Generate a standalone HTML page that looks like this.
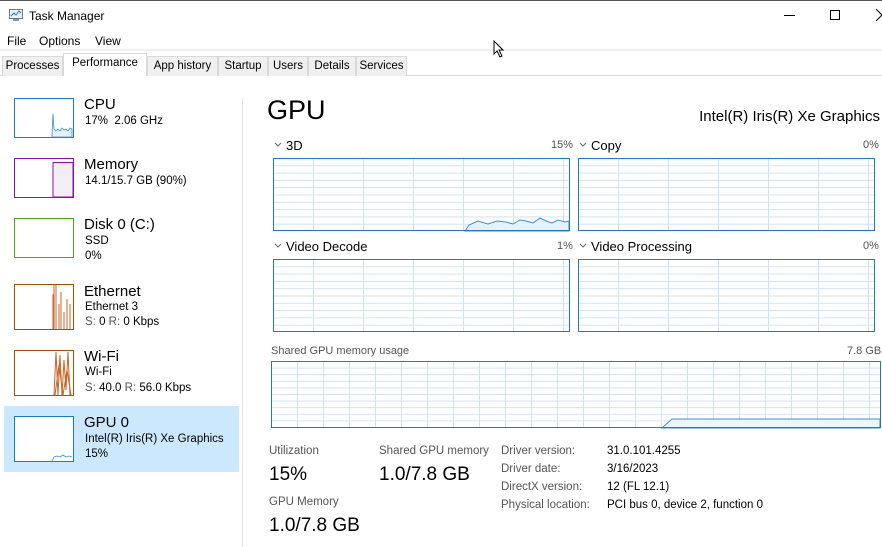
<!DOCTYPE html>
<html><head><meta charset="utf-8"><style>
*{margin:0;padding:0;box-sizing:border-box}
body{width:882px;height:547px;background:#fff;font-family:"Liberation Sans",sans-serif;font-size:11.5px;color:#000;position:relative;overflow:hidden}
.a{position:absolute;white-space:nowrap}
.tab{position:absolute;top:56px;height:20px;background:#f0f0f0;border:1px solid #d9d9d9;border-bottom:none;font-size:11.5px;padding-top:3px;text-align:center}
.g{color:#555}
.t1{font-size:15px}
.t2{font-size:11.5px}
.lbl{font-size:13px}
</style></head><body>
<div class="a" style="left:0;top:0;width:882px;height:1px;background:#555"></div>
<svg class="a" style="left:8px;top:8px" width="16" height="14" viewBox="0 0 16 14"><rect x="1.5" y="1.5" width="13" height="9" fill="#e8f0f8" stroke="#6a7a8a"/><path d="M3 8 L6 5 L8 7 L11 3 L13 5" fill="none" stroke="#2a7ab8" stroke-width="1"/><rect x="5" y="11" width="6" height="2" fill="#8a96a2"/></svg>
<div class="a" style="left:29px;top:9px;font-size:12px">Task Manager</div>
<div class="a" style="left:784px;top:15px;width:11px;height:1px;background:#000"></div>
<div class="a" style="left:830px;top:10px;width:10px;height:10px;border:1px solid #000"></div>
<svg class="a" style="left:876px;top:9px" width="8" height="12"><path d="M0 0 L6 6 L0 12" stroke="#000" fill="none"/></svg>
<div class="a" style="left:7px;top:34px;font-size:12px">File</div>
<div class="a" style="left:39px;top:34px;font-size:12px">Options</div>
<div class="a" style="left:95px;top:34px;font-size:12px">View</div>
<div class="a" style="left:0;top:49px;width:882px;height:2px;background:#f0f0f0"></div>
<div class="a" style="left:0;top:75px;width:882px;height:1px;background:#d9d9d9"></div>
<div class="tab" style="left:2px;width:61px">Processes</div>
<div class="tab" style="left:147px;width:71px">App history</div>
<div class="tab" style="left:218px;width:50px">Startup</div>
<div class="tab" style="left:268px;width:40px">Users</div>
<div class="tab" style="left:308px;width:48px">Details</div>
<div class="tab" style="left:356px;width:51px">Services</div>
<div class="tab" style="left:63px;top:53px;width:84px;height:23px;background:#fff;padding-top:3px">Performance</div>
<svg class="a" style="left:493px;top:40px" width="12" height="18"><path d="M1 1 L1 14 L4 11 L7 17 L9 16 L6 10 L10 10 Z" fill="#fff" stroke="#000"/></svg>
<div class="a" style="left:242px;top:98px;width:1px;height:449px;background:#e5e5e5"></div>
<div class="a" style="left:4px;top:406px;width:235px;height:66px;background:#cce8ff"></div>

<svg class="a" style="left:14px;top:98px" width="60" height="40"><rect x=".5" y=".5" width="59" height="39" fill="#fff" stroke="#1c7ac6"/><path d="M38 39 L38 36 L39 16 L40 31 L42 33 L44 31 L46 33 L48 30 L50 32 L52 31 L54 33 L56 30 L58 31 L58 39 Z" fill="#e6f1fa" stroke="#3c8fcf" stroke-width=".8"/></svg>
<div class="a t1" style="left:84px;top:96px">CPU</div><div class="a t2" style="left:85px;top:115px">17%&nbsp; 2.06 GHz</div>

<svg class="a" style="left:14px;top:158px" width="60" height="40"><rect x=".5" y=".5" width="59" height="39" fill="#fff" stroke="#8b12ae"/><rect x="39" y="4.5" width="20" height="34.5" fill="#f2eff4" stroke="#8b12ae"/></svg>
<div class="a t1" style="left:84px;top:156px">Memory</div><div class="a t2" style="left:85px;top:175px">14.1/15.7 GB (90%)</div>

<svg class="a" style="left:14px;top:218px" width="60" height="40"><rect x=".5" y=".5" width="59" height="39" fill="#fff" stroke="#4da60c"/></svg>
<div class="a t1" style="left:84px;top:216px">Disk 0 (C:)</div><div class="a t2" style="left:85px;top:235px">SSD</div><div class="a t2" style="left:85px;top:250px">0%</div>

<svg class="a" style="left:14px;top:284px" width="60" height="46"><rect x=".5" y=".5" width="59" height="45" fill="#fff" stroke="#a74f01"/><path d="M40 45 L40 1 M42 45 L42 1 M39 45 L39 10 M45 45 L45 20 M47 45 L47 8 M50 45 L50 28 M53 45 L53 15 M56 45 L56 20" stroke="#c8662a" stroke-width="1"/></svg>
<div class="a t1" style="left:84px;top:283px">Ethernet</div><div class="a t2" style="left:85px;top:301px">Ethernet 3</div><div class="a t2" style="left:85px;top:316px"><span class="g">S:</span> 0 <span class="g">R:</span> 0 Kbps</div>

<svg class="a" style="left:14px;top:350px" width="60" height="46"><rect x=".5" y=".5" width="59" height="45" fill="#fff" stroke="#a74f01"/><path d="M40 45 L42 2 L44 45 L46 5 L48 45 L50 10 L52 40 L54 2 L56 45 M41 45 L45 15 L49 45 L53 20 L57 45" stroke="#c8662a" fill="none" stroke-width="1"/></svg>
<div class="a t1" style="left:84px;top:348px">Wi-Fi</div><div class="a t2" style="left:85px;top:366px">Wi-Fi</div><div class="a t2" style="left:85px;top:382px"><span class="g">S:</span> 40.0 <span class="g">R:</span> 56.0 Kbps</div>

<svg class="a" style="left:14px;top:416px" width="60" height="46"><rect x=".5" y=".5" width="59" height="45" fill="#fff" stroke="#1c7ac6"/><path d="M38 45 L40 41 L43 40 L46 41 L49 39 L52 41 L55 40 L58 41" fill="none" stroke="#3c8fcf" stroke-width=".8"/></svg>
<div class="a t1" style="left:84px;top:414px">GPU 0</div><div class="a t2" style="left:85px;top:433px">Intel(R) Iris(R) Xe Graphics</div><div class="a t2" style="left:85px;top:448px">15%</div>

<div class="a" style="left:267px;top:95px;font-size:27px">GPU</div>
<div class="a" style="right:2px;top:108px;font-size:15px">Intel(R) Iris(R) Xe Graphics</div>

<svg class="a" style="left:0;top:0" width="882" height="547" shape-rendering="crispEdges">
<defs>
<pattern id="p1" x="-10" y="0" width="50" height="7.3" patternUnits="userSpaceOnUse"><rect x="0" y="0" width="50" height="1" fill="#cfe3f3"/><rect x="0" y="0" width="1" height="7.3" fill="#cfe3f3"/></pattern>
<pattern id="p2" x="0" y="0" width="26" height="6.6" patternUnits="userSpaceOnUse"><rect x="0" y="0" width="26" height="1" fill="#cfe3f3"/><rect x="0" y="0" width="1" height="6.6" fill="#cfe3f3"/></pattern>
</defs>
<g transform="translate(273,158)"><rect width="297" height="73" fill="url(#p1)"/><path d="M192 73 L196 67 L205 63 L215 66 L224 63 L233 64 L240 66 L247 62 L253 63 L260 65 L267 60 L273 63 L279 65 L285 62 L292 64 L296 63 L296 73 Z" fill="#e6f1fa" stroke="#3c8fcf" stroke-width="1" shape-rendering="auto"/><rect x=".5" y=".5" width="296" height="72" fill="none" stroke="#1c7ac6"/></g>
<g transform="translate(578,158)"><rect width="297" height="73" fill="url(#p1)"/><rect x=".5" y=".5" width="296" height="72" fill="none" stroke="#1c7ac6"/></g>
<g transform="translate(273,259)"><rect width="297" height="73" fill="url(#p1)"/><rect x=".5" y=".5" width="296" height="72" fill="none" stroke="#1c7ac6"/></g>
<g transform="translate(578,259)"><rect width="297" height="73" fill="url(#p1)"/><rect x=".5" y=".5" width="296" height="72" fill="none" stroke="#1c7ac6"/></g>
<g transform="translate(271,361)"><rect width="610" height="67" fill="url(#p2)"/><path d="M391 67 L401 58 L609 58 L609 67 Z" fill="#eef5fb" stroke="#3c8fcf" stroke-width="1" shape-rendering="auto"/><rect x=".5" y=".5" width="609" height="66" fill="none" stroke="#1c7ac6"/></g>
<g shape-rendering="auto">
<path d="M275 143 L278 146 L281 143" stroke="#666" fill="none"/>
<path d="M580 143 L583 146 L586 143" stroke="#666" fill="none"/>
<path d="M275 244 L278 247 L281 244" stroke="#666" fill="none"/>
<path d="M580 244 L583 247 L586 244" stroke="#666" fill="none"/>
</g>
</svg>
<div class="a lbl" style="left:286px;top:138px">3D</div>
<div class="a" style="left:551px;top:139px;font-size:11px;color:#555">15%</div>
<div class="a lbl" style="left:591px;top:138px">Copy</div>
<div class="a" style="left:863px;top:139px;font-size:11px;color:#555">0%</div>
<div class="a lbl" style="left:286px;top:239px">Video Decode</div>
<div class="a" style="left:557px;top:240px;font-size:11px;color:#555">1%</div>
<div class="a lbl" style="left:591px;top:239px">Video Processing</div>
<div class="a" style="left:863px;top:240px;font-size:11px;color:#555">0%</div>
<div class="a" style="left:271px;top:345px;font-size:11px;color:#555">Shared GPU memory usage</div>
<div class="a" style="left:847px;top:345px;font-size:11px;color:#555">7.8 GB</div>

<div class="a g" style="left:269px;top:445px">Utilization</div>
<div class="a" style="left:269px;top:464px;font-size:19px">15%</div>
<div class="a g" style="left:269px;top:496px">GPU Memory</div>
<div class="a" style="left:269px;top:515px;font-size:19px">1.0/7.8 GB</div>
<div class="a g" style="left:379px;top:445px">Shared GPU memory</div>
<div class="a" style="left:379px;top:464px;font-size:19px">1.0/7.8 GB</div>
<div class="a g" style="left:501px;top:445px">Driver version:</div>
<div class="a g" style="left:501px;top:463px">Driver date:</div>
<div class="a g" style="left:501px;top:481px">DirectX version:</div>
<div class="a g" style="left:501px;top:499px">Physical location:</div>
<div class="a" style="left:607px;top:445px">31.0.101.4255</div>
<div class="a" style="left:607px;top:463px">3/16/2023</div>
<div class="a" style="left:607px;top:481px">12 (FL 12.1)</div>
<div class="a" style="left:607px;top:499px">PCI bus 0, device 2, function 0</div>
</body></html>
